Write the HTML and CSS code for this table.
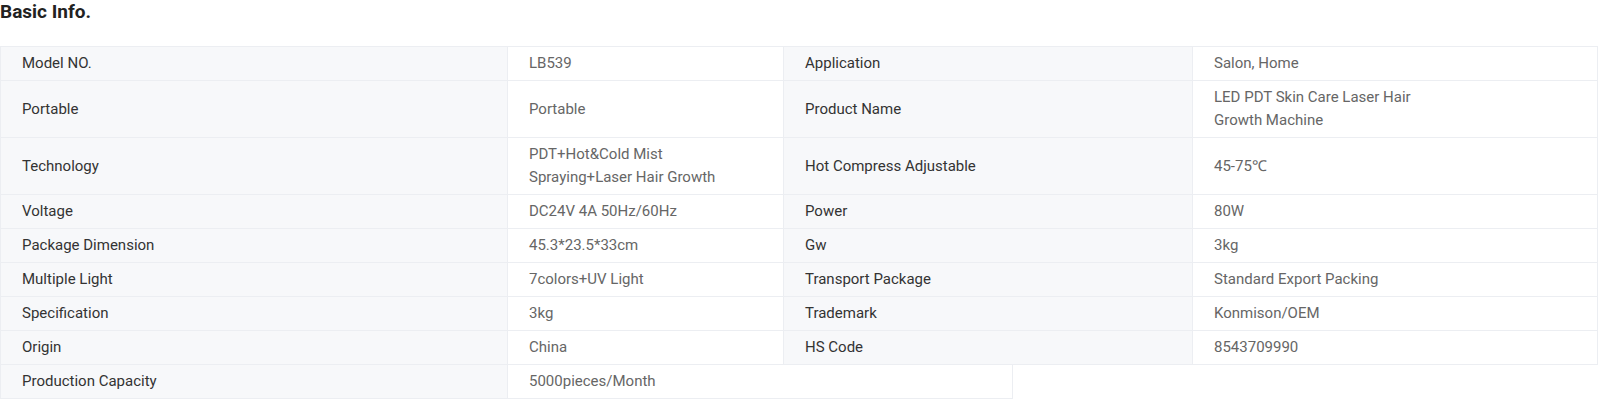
FILE: index.html
```html
<!DOCTYPE html>
<html lang="en">
<head>
<meta charset="utf-8">
<title>Basic Info.</title>
<link rel="stylesheet" href="styles.css">
</head>
<body>
<section class="basic-info">
  <h2 class="title">Basic Info.</h2>
  <div class="spec">
    <div class="row">
      <div class="cell label">Model NO.</div>
      <div class="cell value">LB539</div>
      <div class="cell label">Application</div>
      <div class="cell value">Salon, Home</div>
    </div>
    <div class="row">
      <div class="cell label">Portable</div>
      <div class="cell value">Portable</div>
      <div class="cell label">Product Name</div>
      <div class="cell value">LED PDT Skin Care Laser Hair<br>Growth Machine</div>
    </div>
    <div class="row">
      <div class="cell label">Technology</div>
      <div class="cell value">PDT+Hot&amp;Cold Mist<br>Spraying+Laser Hair Growth</div>
      <div class="cell label">Hot Compress Adjustable</div>
      <div class="cell value">45-75℃</div>
    </div>
    <div class="row">
      <div class="cell label">Voltage</div>
      <div class="cell value">DC24V 4A 50Hz/60Hz</div>
      <div class="cell label">Power</div>
      <div class="cell value">80W</div>
    </div>
    <div class="row">
      <div class="cell label">Package Dimension</div>
      <div class="cell value">45.3*23.5*33cm</div>
      <div class="cell label">Gw</div>
      <div class="cell value">3kg</div>
    </div>
    <div class="row">
      <div class="cell label">Multiple Light</div>
      <div class="cell value">7colors+UV Light</div>
      <div class="cell label">Transport Package</div>
      <div class="cell value">Standard Export Packing</div>
    </div>
    <div class="row">
      <div class="cell label">Specification</div>
      <div class="cell value">3kg</div>
      <div class="cell label">Trademark</div>
      <div class="cell value">Konmison/OEM</div>
    </div>
    <div class="row">
      <div class="cell label">Origin</div>
      <div class="cell value">China</div>
      <div class="cell label">HS Code</div>
      <div class="cell value">8543709990</div>
    </div>
    <div class="row row-last">
      <div class="cell label">Production Capacity</div>
      <div class="cell value">5000pieces/Month</div>
    </div>
  </div>
</section>
</body>
</html>
```

FILE: styles.css
```css
* {
  box-sizing: border-box;
}

html, body {
  margin: 0;
  padding: 0;
  background: #ffffff;
}

body {
  font-family: Roboto, "Liberation Sans", Arial, sans-serif;
  color: #222222;
}

.title {
  margin: 0;
  font-size: 19px;
  line-height: 24px;
  font-weight: 700;
  color: #222222;
}

.spec {
  margin-top: 22px;
  display: flex;
  flex-direction: column;
  align-items: flex-start;
}

.row {
  display: grid;
  grid-template-columns: 507px 276px 409px 405px;
  border-left: 1px solid #eceef2;
}

.row:first-child {
  border-top: 1px solid #eceef2;
}

.row-last {
  grid-template-columns: 507px 505px;
}

.cell {
  display: flex;
  align-items: center;
  padding: 5px 21px;
  font-size: 15px;
  line-height: 23px;
  border-right: 1px solid #eceef2;
  border-bottom: 1px solid #eceef2;
}

.label {
  background: #f7f8fa;
  color: #333333;
}

.value {
  background: #ffffff;
  color: #666666;
}
```
